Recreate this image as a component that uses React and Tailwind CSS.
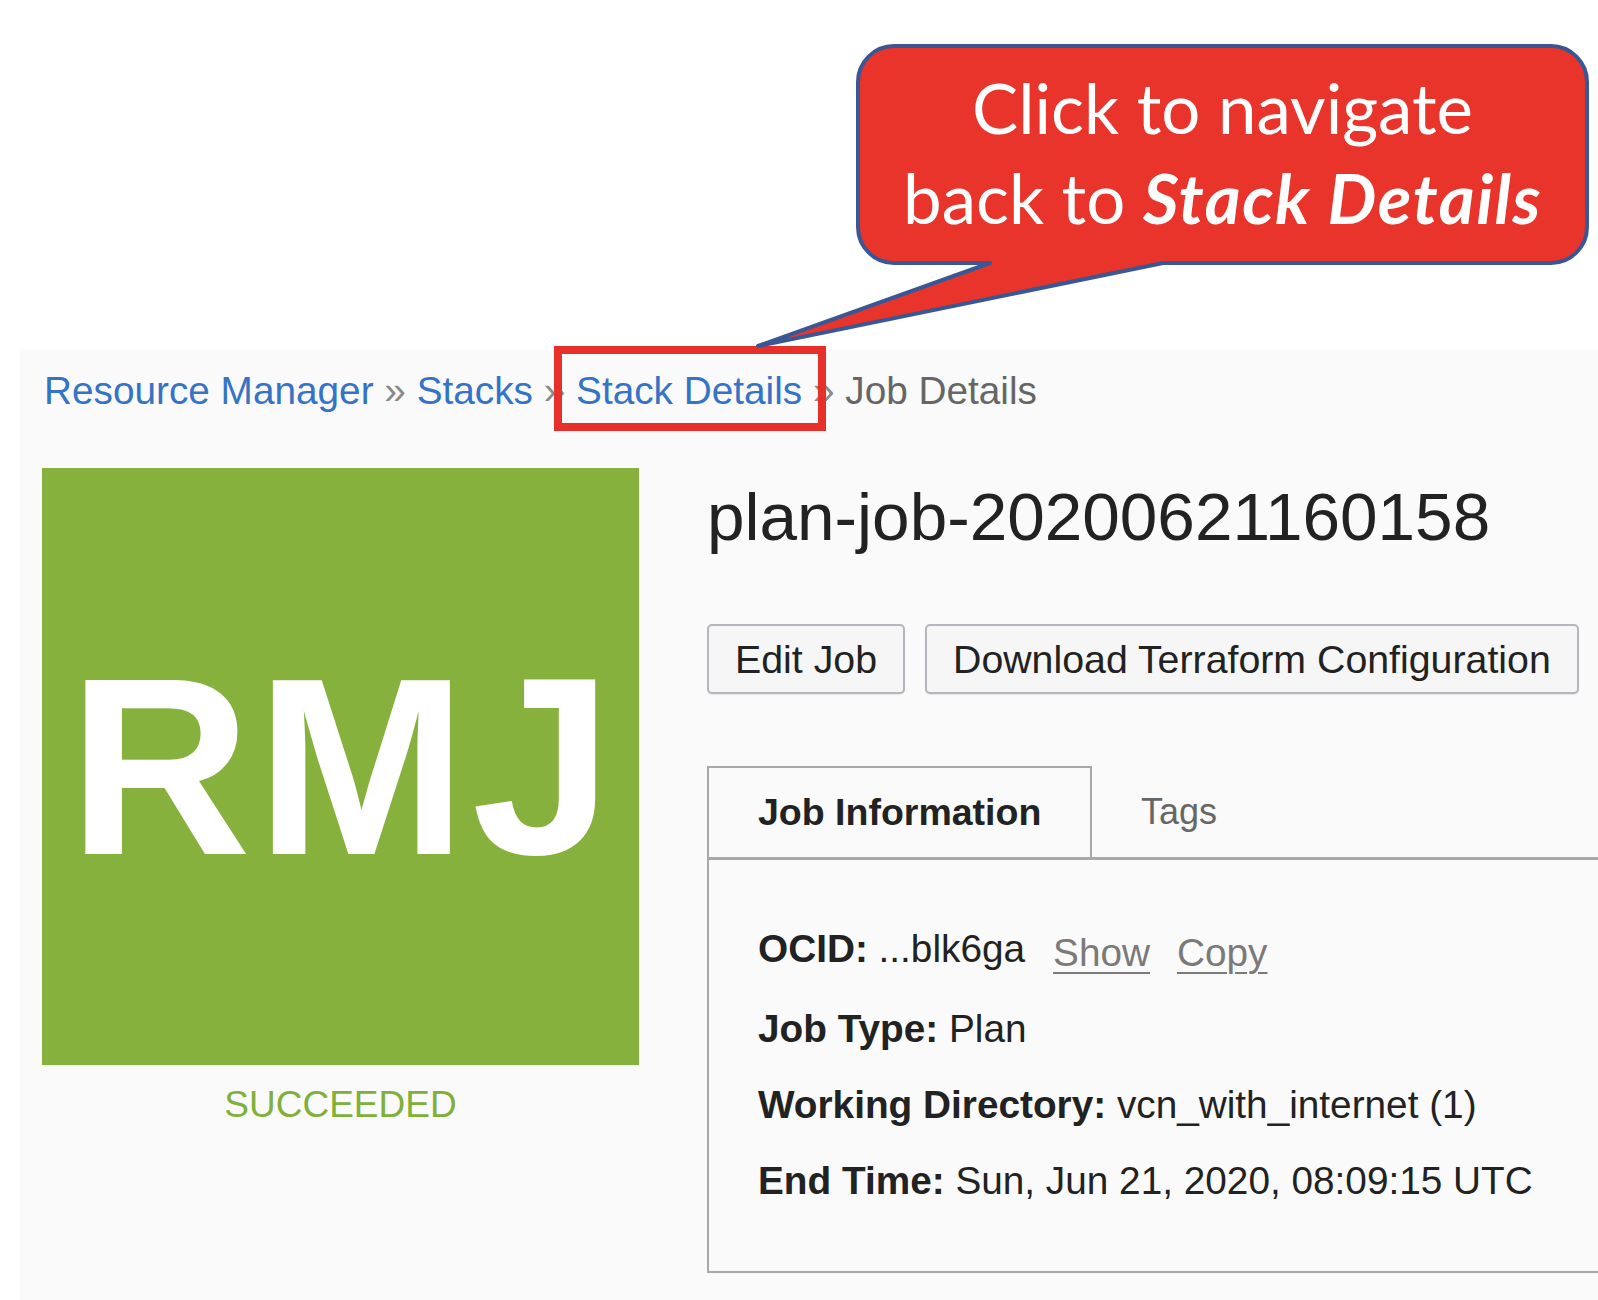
const LINK = 'text-[#3573c6]'

function Sep() {
  return <span className="text-[#8a8a8a]"> » </span>
}

function Breadcrumb() {
  return (
    <div className="whitespace-nowrap pl-[24px] pt-[17px] text-[38.75px] leading-[47px]">
      <span className={LINK}>Resource Manager</span>
      <Sep />
      <span className={LINK}>Stacks</span>
      <Sep />
      <span className={`relative inline-block ${LINK}`}>
        Stack Details
        <span className="absolute -top-[21px] -right-[24px] -bottom-[17px] -left-[22px] border-[8px] border-[#e8302a]" />
      </span>
      <Sep />
      <span className="text-[#666]">Job Details</span>
    </div>
  )
}

function Callout() {
  return (
    <>
      <svg className="pointer-events-none absolute top-0 left-0" width="1598" height="360" viewBox="0 0 1598 360">
        <path
          d="M894 46 H1551 A36 36 0 0 1 1587 82 V227 A36 36 0 0 1 1551 263 H1163 L758 346 L990 263 H894 A36 36 0 0 1 858 227 V82 A36 36 0 0 1 894 46 Z"
          fill="#e8342a"
          stroke="#3a5795"
          strokeWidth="4"
          strokeLinejoin="round"
        />
      </svg>
      <div className="absolute top-[46px] left-[858px] flex h-[217px] w-[729px] flex-col items-center justify-center pb-[4px] font-['Lato',sans-serif] text-[69px] leading-[90px] text-white">
        <div>Click to navigate</div>
        <div>
          back to <span className="font-bold tracking-[1.5px] italic">Stack Details</span>
        </div>
      </div>
    </>
  )
}

function Row({ label, children }) {
  return (
    <div className="whitespace-nowrap">
      <span className="font-bold">{label}</span> {children}
    </div>
  )
}

const btn = 'h-[70px] flex-none rounded-[5px] border-2 border-[#b3b7bd] bg-[#f6f6f6] px-[26px] text-[39.3px] text-[#222] shadow-[0_1px_1px_rgba(0,0,0,0.08)]'

export default function App() {
  return (
    <div className="relative h-[1300px] w-[1598px] overflow-hidden bg-white font-['Liberation_Sans',Arial,sans-serif]">
      <div className="h-[350px]" />
      <div className="ml-[20px] h-[950px] bg-[#fafafa]">
        <Breadcrumb />

        <div className="mt-[54px] flex pl-[22px]">
          <div className="flex w-[597px] flex-none flex-col items-center">
            <div className="flex h-[597px] w-[597px] items-center justify-center bg-[#85b13c]">
              <span className="pl-[5px] text-[253px] leading-none font-bold tracking-[5px] text-white">RMJ</span>
            </div>
            <div className="mt-[18px] text-[37px] leading-[1.2] text-[#80b03a]">SUCCEEDED</div>
          </div>

          <div className="ml-[68px] w-[1100px] flex-none">
            <h1 className="mt-[9px] text-[67.5px] leading-[79px] font-normal text-[#222]">plan-job-20200621160158</h1>

            <div className="mt-[68px] flex gap-[20px] whitespace-nowrap">
              <button className={btn}>Edit Job</button>
              <button className={btn}>Download Terraform Configuration</button>
              <button aria-label="More actions" className={`${btn} w-[200px]`} />
            </div>

            <div className="mt-[72px] flex h-[94px] border-b-[3px] border-[#a8a8a8]">
              <div className="flex w-[385px] items-center border-x-2 border-t-2 border-[#a8a8a8] pl-[49px] text-[37.5px] font-bold text-[#222]">
                Job Information
              </div>
              <div className="flex items-center pl-[49px] text-[36px] text-[#666]">Tags</div>
            </div>

            <div className="border-b-2 border-l-2 border-[#a8a8a8] pt-[51px] pb-[52px] pl-[49px] text-[38.75px] leading-[76px] text-[#222]">
              <Row label="OCID:">
                ...blk6ga
                <span className="ml-[28px] align-[-4px] text-[#7a7a7a] underline decoration-2 underline-offset-[6px]">Show</span>
                <span className="ml-[27px] align-[-4px] text-[#7a7a7a] underline decoration-2 underline-offset-[6px]">Copy</span>
              </Row>
              <Row label="Job Type:">Plan</Row>
              <Row label="Working Directory:">vcn_with_internet (1)</Row>
              <Row label="End Time:">Sun, Jun 21, 2020, 08:09:15 UTC</Row>
            </div>
          </div>
        </div>
      </div>
      <Callout />
    </div>
  )
}
